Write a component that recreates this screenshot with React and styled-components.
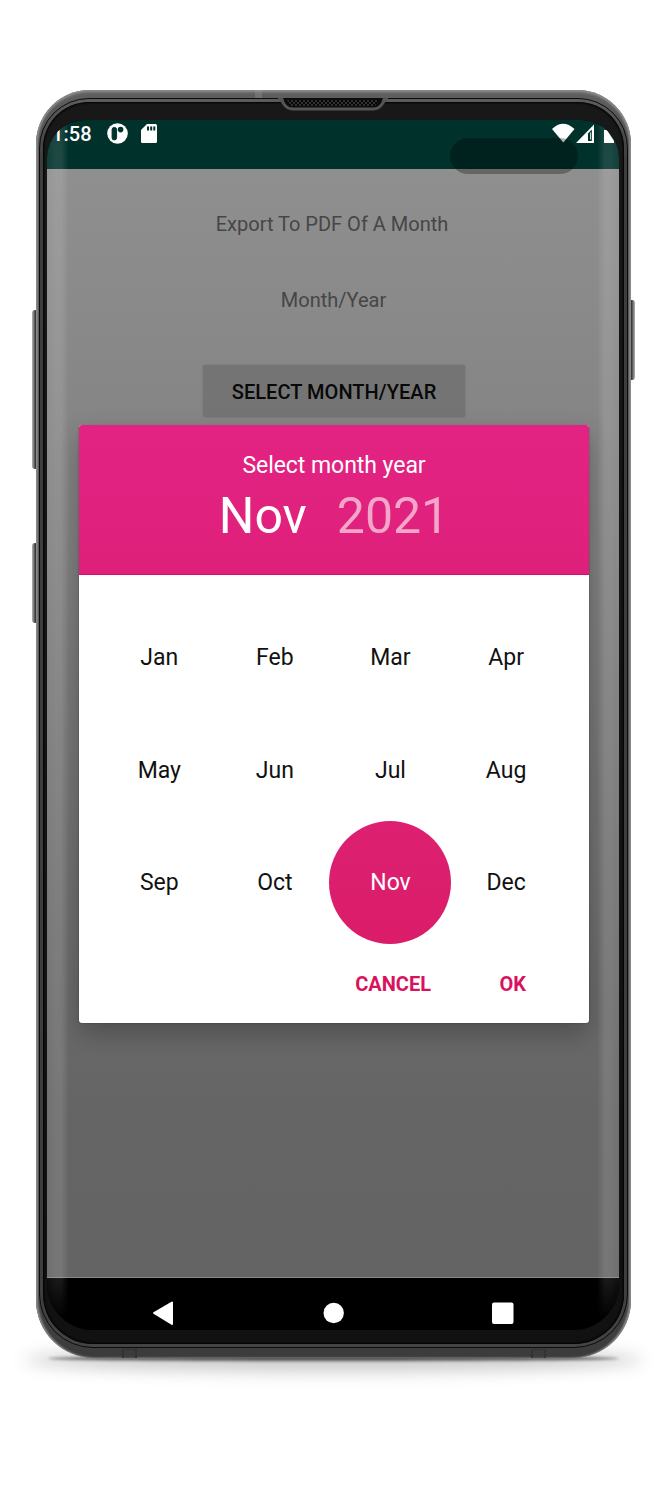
import React from 'react';
import styled, { createGlobalStyle } from 'styled-components';

const GlobalStyle = createGlobalStyle`
  * { box-sizing: border-box; }
  body { margin: 0; background: #fff; font-family: Roboto, "Liberation Sans", sans-serif; }
`;

const Page = styled.main`
  height: 1500px;
  padding: 90px 33px 0 36px;
  overflow: hidden;
`;

const Phone = styled.div`
  position: relative;
  width: 595px;
  height: 1268px;
`;

const GroundShadow = styled.div`
  position: absolute;
  left: ${(p) => p.$inset}px;
  right: ${(p) => p.$inset}px;
  bottom: ${(p) => p.$bottom}px;
  height: ${(p) => p.$height}px;
  border-radius: 50%;
  background: ${(p) => p.$color};
  filter: blur(${(p) => p.$blur}px);
`;

const SideKey = styled.div`
  position: absolute;
  ${(p) => p.$side}: -4px;
  top: ${(p) => p.$top}px;
  width: 6px;
  height: ${(p) => p.$height}px;
  border-radius: 3px;
  background: linear-gradient(to ${(p) => p.$side}, #2b2b2b 35%, #555 55%, #b5b5b5);
`;

const Shell = styled.div`
  position: relative;
  height: 100%;
  padding: 8px 3px 10px;
  border-radius: 54px 54px 58px 58px;
  background: linear-gradient(#606060, #4c4c4c 60px, #444 1200px, #3c3c3c 1262px, #3c3c3c);
  box-shadow: inset 0 3px 3px -1px #8e8e8e, inset 2px 0 2px #8c8c8c, inset -2px 0 2px #8c8c8c;
`;

const AntennaMark = styled.span`
  position: absolute;
  left: ${(p) => p.$left}px;
  ${(p) => (p.$edge === 'top' ? 'top: 0;' : 'bottom: 0;')}
  width: ${(p) => p.$width}px;
  height: ${(p) => (p.$edge === 'top' ? 8 : 9)}px;
  background: ${(p) => (p.$edge === 'top' ? 'rgba(160,160,160,.3)' : 'rgba(60,60,60,.5)')};
  border: solid #333;
  border-width: ${(p) => (p.$edge === 'top' ? '0' : '1px 2px 0')};
`;

const Rim = styled.div`
  height: 100%;
  padding: 3px;
  border: 1px solid #0b0b0b;
  border-radius: 50px 50px 54px 54px;
  background: linear-gradient(#5c5c5c, #3e3e3e 60px, #3e3e3e 1190px, #444);
`;

const Bezel = styled.div`
  height: 100%;
  padding: 18px 5px 14px 4px;
  border-radius: 46px 46px 50px 50px;
  background: linear-gradient(#181818, #111);
  box-shadow: inset 0 0 2px 1px #000;
`;

const Screen = styled.div`
  position: relative;
  display: flex;
  flex-direction: column;
  height: 100%;
  overflow: hidden;
  border-radius: 38px 38px 46px 46px;
  background: #000;
`;

const StatusBar = styled.header`
  display: flex;
  align-items: flex-start;
  justify-content: space-between;
  flex: 0 0 48.5px;
  background: #00312b;
  color: #fff;
`;

const StatusGroup = styled.div`
  display: flex;
`;

const Clock = styled.span`
  width: 54.5px;
  margin-left: -10px;
  font-size: 20px;
  font-weight: 500;
  line-height: 28px;
  text-align: right;
  white-space: nowrap;
`;

const StatusIcon = styled.svg`
  display: block;
  flex: none;
  margin-left: ${(p) => p.$gap || 0}px;
`;

const Activity = styled.section`
  display: flex;
  flex-direction: column;
  align-items: center;
  flex: 1;
  padding-top: 41px;
  background: linear-gradient(#8f8f8f, #8a8a8a 130px, #828282 330px, #727272 660px, #656565 940px, #646464);
  border-bottom: 1px solid #868686;
`;

const Label = styled.p`
  margin: ${(p) => p.$top || 0}px 0 0;
  padding-left: ${(p) => p.$shift || 0}px;
  padding-right: ${(p) => p.$pull || 0}px;
  color: #464646;
  font-size: 20px;
  line-height: 28px;
`;

const PickButton = styled.button`
  width: 262px;
  height: 52px;
  margin: 51px 0 0 2px;
  padding: 2px 0 0;
  border: 0;
  border-radius: 2px;
  background: #747474;
  box-shadow: 0 0 2px rgba(80, 80, 80, 0.45);
  color: #080808;
  font: 500 20px Roboto, sans-serif;
  letter-spacing: 0.05px;
`;

const NavBar = styled.nav`
  flex: 0 0 52px;
  background: #000;
`;

const NavIcons = styled.svg`
  display: block;
`;

const EdgeShine = styled.div`
  position: absolute;
  ${(p) => p.$side}: 0;
  top: 0;
  bottom: 0;
  width: 22px;
  background: linear-gradient(to ${(p) => p.$side}, rgba(255, 255, 255, 0), rgba(255, 255, 255, 0.12) 35%, rgba(255, 255, 255, 0.12) 60%, rgba(255, 255, 255, 0.07));
  mask-image: linear-gradient(rgba(0, 0, 0, 0.9), #000 50px, #000 1158px, rgba(0, 0, 0, 0.8) 1159px, transparent 1200px);
  pointer-events: none;
`;

const CameraCutout = styled.div`
  position: absolute;
  left: 402.5px;
  top: 18px;
  width: 128px;
  height: 36px;
  border-radius: 18px;
  background: rgba(0, 0, 0, 0.29);
`;

const Speaker = styled.svg`
  position: absolute;
  left: 241px;
  top: 8px;
`;

const Dialog = styled.div`
  position: absolute;
  left: 32px;
  top: 305px;
  display: flex;
  flex-direction: column;
  width: 510px;
  height: 597.5px;
  overflow: hidden;
  border-radius: 3px;
  background: #fff;
`;

const DialogShadow = styled.div`
  position: absolute;
  left: 32px;
  top: 305px;
  width: 510px;
  height: 597px;
  border-radius: 3px;
  box-shadow: 0 12px 26px rgba(0, 0, 0, 0.26), 0 1px 2px rgba(0, 0, 0, 0.35);
`;

const DialogHeader = styled.div`
  flex: 0 0 150px;
  padding-top: 25px;
  background: linear-gradient(#e32383, #df207a);
  border-bottom: 1px solid #d60f65;
  color: #fff;
  text-align: center;
`;

const DialogTitle = styled.div`
  padding-top: 1px;
  font-size: 23px;
  line-height: 30px;
  letter-spacing: -0.05px;
`;

const Selection = styled.div`
  display: flex;
  justify-content: center;
  gap: 30px;
  font-size: 50px;
  line-height: 70px;
`;

const Year = styled.span`
  color: #f4a5ca;
`;

const MonthGrid = styled.div`
  display: grid;
  grid-template-columns: repeat(4, 115.6px);
  grid-auto-rows: 112.3px;
  margin: 26.8px 0 0 22.5px;
`;

const Month = styled.button`
  display: flex;
  align-items: center;
  justify-content: center;
  place-self: center;
  width: 122px;
  height: 123px;
  margin: -5px;
  padding: 0;
  border: 0;
  border-radius: 50%;
  background: ${(p) => (p.$selected ? 'linear-gradient(#dd2071, #da1c69)' : 'transparent')};
  color: ${(p) => (p.$selected ? '#fff' : '#111')};
  font: 400 23px Roboto, sans-serif;
`;

const Actions = styled.div`
  display: flex;
  justify-content: flex-end;
  gap: 68.5px;
  padding: 31.6px 63px 0 0;
`;

const Action = styled.button`
  padding: 0;
  border: 0;
  background: none;
  color: #d8125f;
  font: 700 20px/28px Roboto, sans-serif;
`;

const MONTHS = ['Jan', 'Feb', 'Mar', 'Apr', 'May', 'Jun', 'Jul', 'Aug', 'Sep', 'Oct', 'Nov', 'Dec'];

export default function App() {
  return (
    <>
      <GlobalStyle />
      <Page>
        <Phone>
          <GroundShadow $inset={-12} $bottom={-14} $height={24} $blur={8} $color="rgba(0,0,0,.2)" />
          <GroundShadow $inset={12} $bottom={-3} $height={5} $blur={1.5} $color="rgba(0,0,0,.6)" />
          <SideKey $side="left" $top={220} $height={159} />
          <SideKey $side="left" $top={453} $height={80} />
          <SideKey $side="right" $top={210} $height={80} />
          <Shell>
            <AntennaMark $edge="top" $left={219} $width={7} />
            <AntennaMark $edge="bottom" $left={86} $width={15} />
            <AntennaMark $edge="bottom" $left={495} $width={15} />
            <Rim>
              <Bezel>
                <Screen>
                  <StatusBar>
                    <StatusGroup>
                      <Clock>11:58</Clock>
                      <StatusIcon $gap={15.5} width="21" height="28" viewBox="0 0 21 28">
                        <circle cx="10.5" cy="13.5" r="10.3" fill="#fff" />
                        <rect x="5.1" y="7.4" width="4.5" height="12.5" rx="2.2" fill="#00312b" stroke="#00312b" />
                        <circle cx="13.6" cy="9.6" r="2.8" fill="#00312b" />
                      </StatusIcon>
                      <StatusIcon $gap={13} width="16" height="28" viewBox="0 0 16 28">
                        <path d="M6 4h8.5Q16 4 16 5.5v16Q16 23 14.5 23h-13Q0 23 0 21.5V10z" fill="#fff" />
                        <path d="M6 6.5h2v4H6zM9.2 6.5h2v4h-2zM12.3 6.5h2v4h-2z" fill="#00312b" />
                      </StatusIcon>
                    </StatusGroup>
                    <StatusGroup>
                      <StatusIcon width="67" height="28" viewBox="0 0 67 28">
                        <path d="M0 9Q11-1.500 22.500 9L11.300 22.500z" fill="#fff" />
                        <path d="M24 23L42 4.500V23z" fill="#fff" />
                        <path d="M36 13.500L39.800 9.500V21H36z" fill="#00312b" />
                        <path d="M38 12.500h0.800v7h-0.800z" fill="#fff" />
                        <path d="M52 10h3l7 11v2H52z" fill="#fff" />
                      </StatusIcon>
                    </StatusGroup>
                  </StatusBar>
                  <Activity>
                    <Label $pull={2}>Export To PDF Of A Month</Label>
                    <Label $top={48} $shift={1}>Month/Year</Label>
                    <PickButton>SELECT MONTH/YEAR</PickButton>
                  </Activity>
                  <NavBar>
                    <NavIcons width="572" height="52" viewBox="0 0 572 52" fill="#fff" stroke="#fff" strokeLinejoin="round">
                      <path d="M107 35L125 24.5v21.5z" strokeWidth="2" />
                      <circle cx="286.7" cy="35" r="10.2" stroke="none" />
                      <rect x="445" y="24.5" width="21.5" height="21.5" rx="2" stroke="none" />
                    </NavIcons>
                  </NavBar>
                  <CameraCutout />
                  <DialogShadow />
                  <EdgeShine $side="left" />
                  <EdgeShine $side="right" />
                  <Dialog role="dialog">
                    <DialogHeader>
                      <DialogTitle>Select month year</DialogTitle>
                      <Selection>
                        <span>Nov</span>
                        <Year>2021</Year>
                      </Selection>
                    </DialogHeader>
                    <MonthGrid>
                      {MONTHS.map((m) => (
                        <Month key={m} $selected={m === 'Nov'}>{m}</Month>
                      ))}
                    </MonthGrid>
                    <Actions>
                      <Action>CANCEL</Action>
                      <Action>OK</Action>
                    </Actions>
                  </Dialog>
                </Screen>
              </Bezel>
            </Rim>
            <Speaker width="112" height="14" viewBox="0 0 112 14">
              <defs>
                <pattern id="mesh" width="4" height="4" patternUnits="userSpaceOnUse">
                  <rect width="4" height="4" fill="#080808" />
                  <path d="M0 0h2v2H0zM2 2h2v2H2z" fill="#303030" />
                </pattern>
              </defs>
              <path d="M1 1.500Q5 2 7 6Q10 11 16 11H96Q102 11 105 6Q107 2 111 1.500z" fill="#111" stroke="#555" strokeWidth="3" />
              <path d="M6 0Q9 9 15 9H97Q103 9 106 0z" fill="#0c0c0c" />
              <path d="M10 2H102L98 8H14z" fill="url(#mesh)" />
            </Speaker>
          </Shell>
        </Phone>
      </Page>
    </>
  );
}
